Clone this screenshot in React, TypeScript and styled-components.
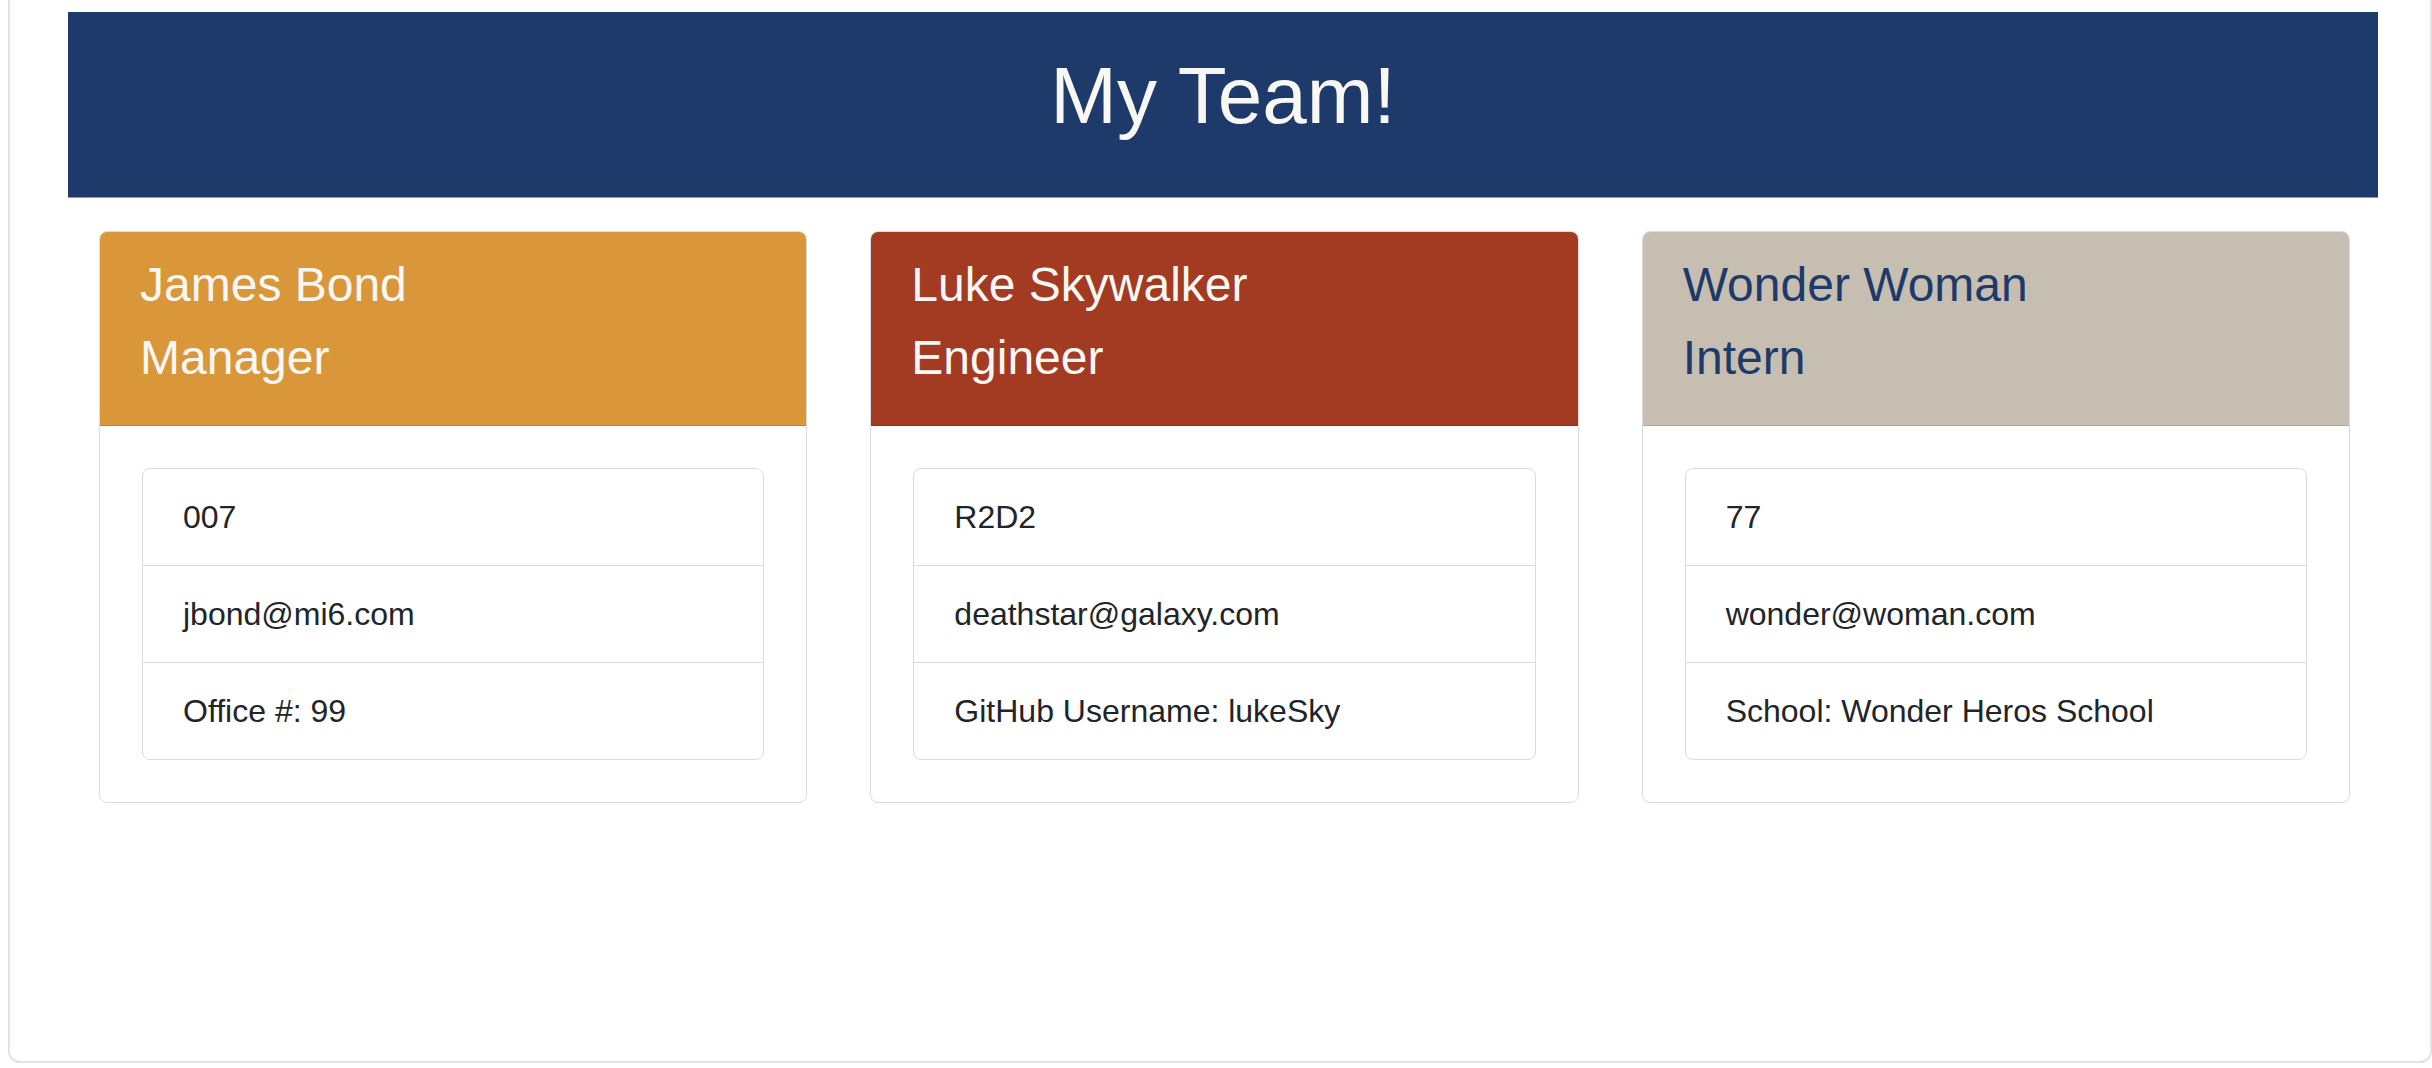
import React from "react";
import styled, { createGlobalStyle } from "styled-components";

const GlobalStyle = createGlobalStyle`
  html, body {
    margin: 0;
    padding: 0;
    background: #ffffff;
  }
  body {
    font-family: "Liberation Sans", Arial, Helvetica, sans-serif;
    color: #212529;
  }
  * {
    box-sizing: border-box;
  }
`;

const Frame = styled.div`
  margin-left: 8px;
  width: 2424px;
  height: 1063px;
  border: 2px solid #e2e2e7;
  border-top: none;
  border-radius: 0 0 12px 12px;
  background: #ffffff;
`;

const Container = styled.div`
  width: 2310px;
  margin-left: 58px;
  padding-top: 12px;
`;

const Header = styled.header`
  background: #1e3a6a;
  border-bottom: 1px solid #8a99b5;
  padding: 36px 0 37px;
  text-align: center;
`;

const Title = styled.h1`
  margin: 0 0 16px;
  font-size: 80px;
  font-weight: 400;
  line-height: 96px;
  color: #f8f7f4;
`;

const Row = styled.div`
  display: grid;
  grid-template-columns: repeat(3, 1fr);
  column-gap: 63px;
  padding: 0 28px 0 31px;
  margin-top: 33px;
  align-items: start;
`;

const Card = styled.section`
  border: 1px solid #dcdcdc;
  border-radius: 8px;
  overflow: hidden;
  background: #ffffff;
`;

const CardHeader = styled.div<{ $bg: string; $fg: string }>`
  background: ${(p) => p.$bg};
  color: ${(p) => p.$fg};
  padding: 24px 40px 24px;
  border-bottom: 1px solid rgba(0, 0, 0, 0.125);
`;

const HeaderLine = styled.h4`
  margin: 0 0 15px;
  font-size: 48px;
  font-weight: 400;
  line-height: 57.6px;
`;

const CardBody = styled.div`
  padding: 42px;
`;

const List = styled.ul`
  list-style: none;
  margin: 0;
  padding: 0;
  border: 1px solid #dcdcdc;
  border-radius: 8px;
`;

const Item = styled.li`
  padding: 24px 40px;
  font-size: 32px;
  line-height: 48px;
  color: #212529;
  & + & {
    border-top: 1px solid #dcdcdc;
  }
`;

type Member = {
  name: string;
  role: string;
  id: string;
  email: string;
  extra: string;
  bg: string;
  fg: string;
};

const team: Member[] = [
  {
    name: "James Bond",
    role: "Manager",
    id: "007",
    email: "jbond@mi6.com",
    extra: "Office #: 99",
    bg: "#d9973a",
    fg: "#f8f7f4",
  },
  {
    name: "Luke Skywalker",
    role: "Engineer",
    id: "R2D2",
    email: "deathstar@galaxy.com",
    extra: "GitHub Username: lukeSky",
    bg: "#a33a22",
    fg: "#f8f7f4",
  },
  {
    name: "Wonder Woman",
    role: "Intern",
    id: "77",
    email: "wonder@woman.com",
    extra: "School: Wonder Heros School",
    bg: "#c6beb0",
    fg: "#1e3a6a",
  },
];

export default function App() {
  return (
    <>
      <GlobalStyle />
      <Frame>
        <Container>
          <Header>
            <Title>My Team!</Title>
          </Header>
          <Row>
            {team.map((m) => (
              <Card key={m.name}>
                <CardHeader $bg={m.bg} $fg={m.fg}>
                  <HeaderLine>{m.name}</HeaderLine>
                  <HeaderLine>{m.role}</HeaderLine>
                </CardHeader>
                <CardBody>
                  <List>
                    <Item>{m.id}</Item>
                    <Item>{m.email}</Item>
                    <Item>{m.extra}</Item>
                  </List>
                </CardBody>
              </Card>
            ))}
          </Row>
        </Container>
      </Frame>
    </>
  );
}
